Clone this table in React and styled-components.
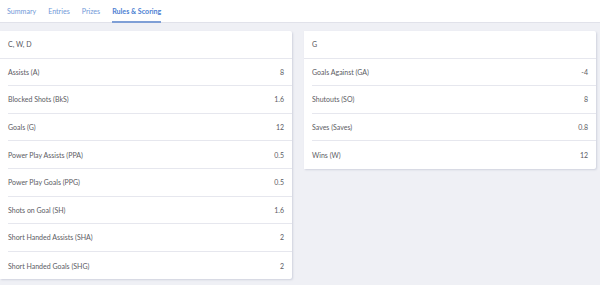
import React from "react";
import styled, { createGlobalStyle } from "styled-components";

const GlobalStyle = createGlobalStyle`
  html, body {
    margin: 0;
    padding: 0;
    background: #eff0f5;
    font-family: Lato, "Open Sans", sans-serif;
  }
`;

const Page = styled.div`
  min-height: 285px;
  background: #eff0f5;
`;

const TabBar = styled.nav`
  display: flex;
  align-items: stretch;
  height: 22px;
  padding-left: 7px;
  gap: 12px;
  background: #ffffff;
  border-bottom: 1px solid #e1e2ea;
`;

const Tab = styled.div`
  display: flex;
  align-items: center;
  font-size: 7.1px;
  color: ${(p) => (p.active ? "#4d7fd3" : "#7299d8")};
  font-weight: ${(p) => (p.active ? 700 : 400)};
  border-bottom: 2px solid ${(p) => (p.active ? "#7f9fd6" : "transparent")};
  margin-bottom: -1px;
  padding-top: 1px;
`;

const Columns = styled.div`
  display: grid;
  grid-template-columns: 1fr 1fr;
  gap: 12px;
  padding: 8px 4px 0 0;
`;

const Card = styled.section`
  background: #ffffff;
  box-shadow: 1px 1px 2px rgba(150, 155, 180, 0.35);
  border-radius: 0 2px 2px 0;
`;

const Header = styled.div`
  display: flex;
  align-items: center;
  height: 27.6px;
  box-sizing: border-box;
  padding: 0 8px;
  font-size: 7px;
  color: #55555d;
  border-bottom: 1px solid #e6e7ee;
`;

const Row = styled.div`
  display: flex;
  align-items: center;
  justify-content: space-between;
  height: 27.6px;
  box-sizing: border-box;
  margin-left: 8px;
  padding-right: 8px;
  font-size: 7px;
  color: #5b5b63;
  border-bottom: ${(p) => (p.last ? "none" : "1px solid #e6e7ee")};
`;

const skaters = [
  ["Assists (A)", "8"],
  ["Blocked Shots (BkS)", "1.6"],
  ["Goals (G)", "12"],
  ["Power Play Assists (PPA)", "0.5"],
  ["Power Play Goals (PPG)", "0.5"],
  ["Shots on Goal (SH)", "1.6"],
  ["Short Handed Assists (SHA)", "2"],
  ["Short Handed Goals (SHG)", "2"],
];

const goalies = [
  ["Goals Against (GA)", "-4"],
  ["Shutouts (SO)", "8"],
  ["Saves (Saves)", "0.8"],
  ["Wins (W)", "12"],
];

const ScoringCard = ({ title, rows }) => (
  <Card>
    <Header>{title}</Header>
    {rows.map(([name, pts], i) => (
      <Row key={name} last={i === rows.length - 1}>
        <span>{name}</span>
        <span>{pts}</span>
      </Row>
    ))}
  </Card>
);

export default function App() {
  return (
    <Page>
      <GlobalStyle />
      <TabBar>
        <Tab>Summary</Tab>
        <Tab>Entries</Tab>
        <Tab>Prizes</Tab>
        <Tab active>Rules &amp; Scoring</Tab>
      </TabBar>
      <Columns>
        <ScoringCard title="C, W, D" rows={skaters} />
        <div>
          <ScoringCard title="G" rows={goalies} />
        </div>
      </Columns>
    </Page>
  );
}
